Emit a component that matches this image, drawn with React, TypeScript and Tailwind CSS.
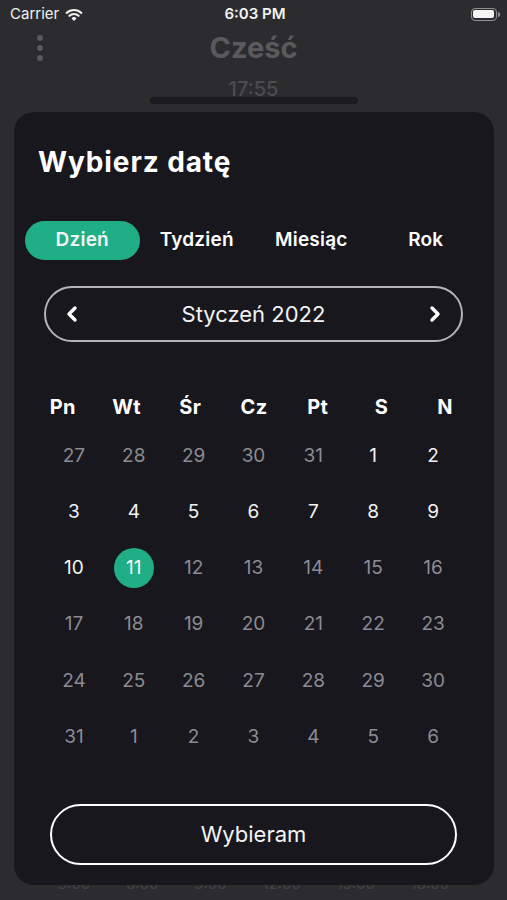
import React from "react";
import { ChevronLeft, ChevronRight } from "lucide-react";

const headers = ["Pn", "Wt", "Śr", "Cz", "Pt", "S", "N"];

type Day = { n: number; tone: "dim" | "bright" | "selected" };

const rows: Day[][] = (() => {
  const all: Day[] = [];
  [27, 28, 29, 30, 31].forEach((n) => all.push({ n, tone: "dim" }));
  for (let n = 1; n <= 31; n++) {
    all.push({ n, tone: n < 11 ? "bright" : n === 11 ? "selected" : "dim" });
  }
  for (let n = 1; n <= 6; n++) all.push({ n, tone: "dim" });
  const out: Day[][] = [];
  for (let i = 0; i < 6; i++) out.push(all.slice(i * 7, i * 7 + 7));
  return out;
})();

function Wifi() {
  return (
    <svg width="18" height="13" viewBox="0 0 18 13" fill="none">
      <path d="M1.6 4.9 A10.8 10.8 0 0 1 16.4 4.9" stroke="#f2f2f2" strokeWidth="2.1" strokeLinecap="round" />
      <path d="M4.4 7.8 A6.7 6.7 0 0 1 13.6 7.8" stroke="#f2f2f2" strokeWidth="2.1" strokeLinecap="round" />
      <path d="M9 12.4 L6.9 10.4 A3 3 0 0 1 11.1 10.4 Z" fill="#f2f2f2" stroke="#f2f2f2" strokeWidth="1" strokeLinejoin="round" />
    </svg>
  );
}

function Battery() {
  return (
    <div className="flex items-center">
      <div className="w-[26px] h-[13px] rounded-[4px] border border-[#8e8e90] p-[1.5px]">
        <div className="w-full h-full rounded-[2px] bg-[#f4f4f4]" />
      </div>
      <div className="w-[2px] h-[5px] rounded-r-sm bg-[#8e8e90] ml-[1px]" />
    </div>
  );
}

export default function App() {
  return (
    <div className="relative w-full h-[900px] overflow-hidden bg-[#2c2c2e] font-['Inter','Noto_Sans',sans-serif]">
      {/* Background screen */}
      <div className="flex flex-col h-full">
        <div className="grid grid-cols-3 items-center h-[28px] pl-[10px] pr-[7px]">
          <div className="flex items-center gap-[6px] text-[15px] text-[#f2f2f2]">
            <span>Carrier</span>
            <Wifi />
          </div>
          <div className="text-center text-[15px] font-semibold text-[#f2f2f2]">6:03 PM</div>
          <div className="flex justify-end">
            <Battery />
          </div>
        </div>
        <div className="grid grid-cols-[1fr_auto_1fr] items-center mt-[5px]">
          <div className="flex flex-col gap-[4px] pl-[37px]">
            <div className="w-[6px] h-[6px] rounded-full bg-[#58585a]" />
            <div className="w-[6px] h-[6px] rounded-full bg-[#58585a]" />
            <div className="w-[6px] h-[6px] rounded-full bg-[#58585a]" />
          </div>
          <div className="text-[29px] leading-[30px] font-bold text-[#5a5a5c]">Cześć</div>
          <div />
        </div>
        <div className="mt-[14px] text-center text-[20px] leading-[24px] font-medium text-[#4c4c4e]">17:55</div>
        <div className="flex-1" />
        <div className="flex justify-around px-[40px] pb-[6px] text-[15px] leading-[20px] text-[#444446]">
          <span>3:00</span>
          <span>6:00</span>
          <span>9:00</span>
          <span>12:00</span>
          <span>15:00</span>
          <span>18:00</span>
        </div>
      </div>

      {/* Modal sheet overlay */}
      <div className="absolute inset-0 flex flex-col items-center pt-[97px] pb-[15px]">
        <div className="w-[208px] h-[7px] rounded-full bg-[#1b1a20]" />
        <div className="mt-[8px] self-stretch mx-[14px] mr-[13px] flex-1 rounded-[20px] bg-[#18171e] flex flex-col">
          <div className="mt-[34px] pl-[24px] text-[28px] leading-[32px] font-bold text-white tracking-[0.9px]">
            Wybierz datę
          </div>

          <div className="mt-[43px] mx-[11px] grid grid-cols-4 h-[39px]">
            <div className="flex items-center justify-center rounded-full bg-[#1fae85] text-[19px] font-semibold tracking-[0.2px] text-[#f4f4f4]">
              Dzień
            </div>
            <div className="flex items-center justify-center text-[19px] font-semibold tracking-[0.2px] text-white">Tydzień</div>
            <div className="flex items-center justify-center text-[19px] font-semibold tracking-[0.2px] text-white">Miesiąc</div>
            <div className="flex items-center justify-center text-[19px] font-semibold tracking-[0.2px] text-white">Rok</div>
          </div>

          <div className="mt-[26px] mx-[30px] mr-[31px] h-[56px] rounded-full border-2 border-[#b4b3b8] flex items-center justify-between px-[14px]">
            <ChevronLeft size={24} strokeWidth={3.4} color="#ffffff" />
            <span className="text-[22px] text-[#f2f2f2]">Styczeń 2022</span>
            <ChevronRight size={24} strokeWidth={3.4} color="#ffffff" />
          </div>

          <div className="mt-[53px] mx-[17px] grid grid-cols-7 h-[24px] items-center">
            {headers.map((h) => (
              <div key={h} className="text-center text-[20px] leading-[24px] font-bold tracking-[0.3px] text-white">
                {h}
              </div>
            ))}
          </div>

          <div className="mt-[9px] mx-[30px] mr-[31px] flex flex-col">
            {rows.map((row, ri) => (
              <div key={ri} className="grid grid-cols-7 h-[56.2px] items-center">
                {row.map((d, di) => (
                  <div key={di} className="flex items-center justify-center">
                    {d.tone === "selected" ? (
                      <div className="w-[40px] h-[40px] rounded-full bg-[#1fae85] flex items-center justify-center text-[19px] text-[#f4f4f4]">
                        {d.n}
                      </div>
                    ) : (
                      <span
                        className={
                          d.tone === "bright"
                            ? "text-[19px] text-[#f2f2f2]"
                            : "text-[19px] text-[#8c8b91]"
                        }
                      >
                        {d.n}
                      </span>
                    )}
                  </div>
                ))}
              </div>
            ))}
          </div>

          <div className="mt-[39px] mx-[36px] mr-[37px] h-[61px] rounded-full border-[2.5px] border-white flex items-center justify-center text-[22px] text-[#f4f4f4]">
            Wybieram
          </div>
        </div>
      </div>
    </div>
  );
}
